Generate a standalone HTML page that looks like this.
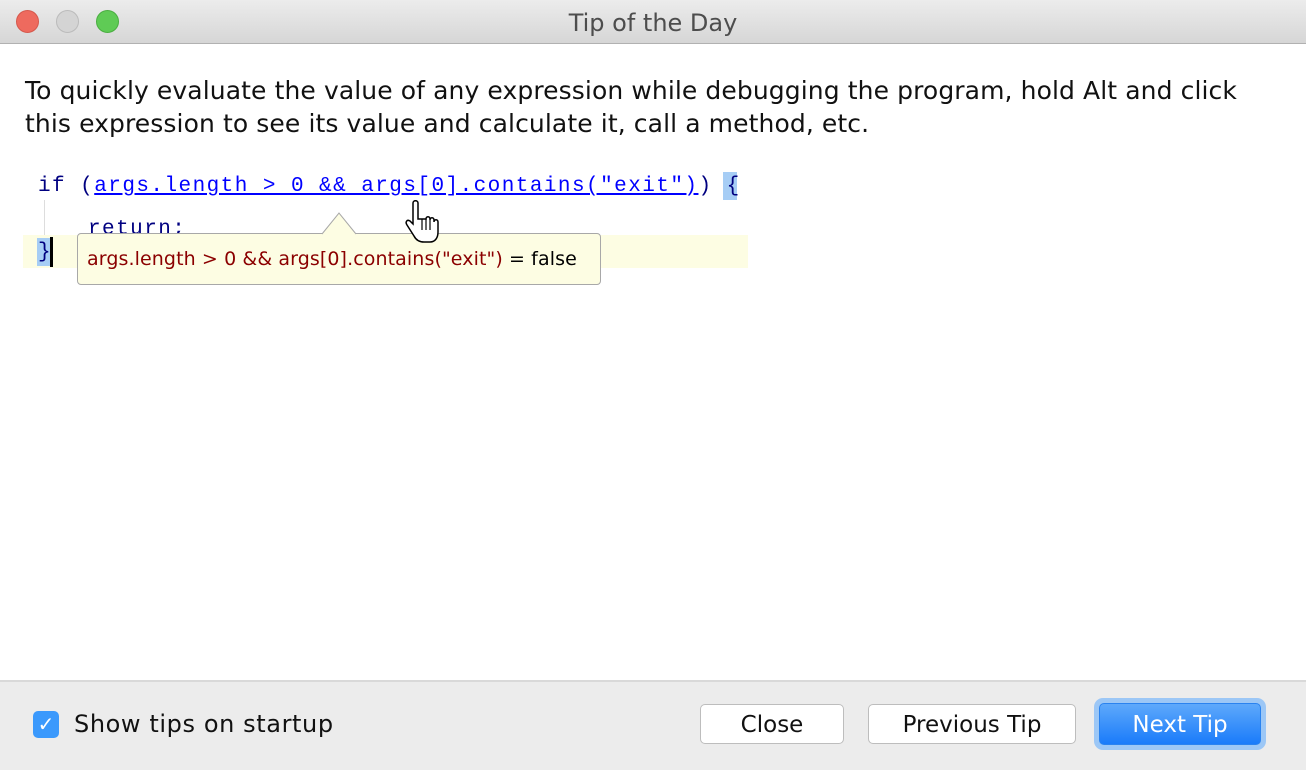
<!DOCTYPE html><html><head><style>
body{margin:0;width:1306px;height:768px;background:#fff;position:relative;overflow:hidden;font-family:"DejaVu Sans","Liberation Sans",sans-serif}
.tb{position:absolute;left:0;top:0;width:1306px;height:43px;background:linear-gradient(#ececec,#d6d6d6);border-bottom:1px solid #b1b1b1}
.dot{position:absolute;top:10px;width:23px;height:23px;border-radius:50%}
.title{position:absolute;top:9px;left:0;width:1306px;text-align:center;font-size:24px;color:#4d4d4d}
.p{position:absolute;left:25px;top:74px;font-size:25px;letter-spacing:0.1px;line-height:33px;color:#111}
.code{position:absolute;font-family:"Liberation Mono",monospace;font-size:21px;letter-spacing:1.45px;color:#000080;white-space:pre}
.u{color:#0000ff;text-decoration:underline}
.bot{position:absolute;left:0;top:680px;width:1306px;height:88px;background:#ececec;border-top:2px solid #d9d9d9}
.btn{position:absolute;top:704px;height:40px;border:1px solid #bdbdbd;border-radius:5px;background:#fff;font-size:23px;line-height:40px;text-align:center;color:#111;box-sizing:border-box}
</style></head><body>
<div class="tb"><div class="dot" style="left:16px;background:#ee6a5e;border:1px solid #d5584c;box-sizing:border-box"></div><div class="dot" style="left:56px;background:#d4d4d4;border:1px solid #bbb;box-sizing:border-box"></div><div class="dot" style="left:96px;background:#5fcb55;border:1px solid #4aae41;box-sizing:border-box"></div><div class="title">Tip of the Day</div></div>
<div class="p">To quickly evaluate the value of any expression while debugging the program, hold Alt and click<br>this expression to see its value and calculate it, call a method, etc.</div>
<div style="position:absolute;left:23px;top:235px;width:725px;height:33px;background:#fdfde3"></div>
<div style="position:absolute;left:44px;top:200px;width:1px;height:35px;background:#ddd"></div>
<div style="position:absolute;left:723px;top:172px;width:14px;height:28px;background:#a6cdf5"></div>
<div style="position:absolute;left:37px;top:238px;width:13px;height:28px;background:#a6cdf5"></div>
<div style="position:absolute;left:50px;top:237px;width:3px;height:30px;background:#000"></div>
<div class="code" style="left:38px;top:175px">if (<span class="u">args.length &gt; 0 &amp;&amp; args[0].contains("exit")</span>) {</div>
<div class="code" style="left:88px;top:218px">return;</div>
<div class="code" style="left:38px;top:241px">}</div>
<div style="position:absolute;left:77px;top:233px;width:524px;height:52px;box-sizing:border-box;background:#fdfde3;border:1px solid #a8a8a8;border-radius:4px"></div>
<svg style="position:absolute;left:320px;top:211px" width="40" height="24"><path d="M2 23 L19 2 L36 23" fill="#fdfde3" stroke="#a8a8a8" stroke-width="1"/><rect x="3" y="22.5" width="32" height="2" fill="#fdfde3"/></svg>
<div style="position:absolute;left:87px;top:248px;font-size:19px;letter-spacing:0.1px;color:#8b0000">args.length &gt; 0 &amp;&amp; args[0].contains("exit") <span style="color:#000">= false</span></div>
<svg style="position:absolute;left:403px;top:200px" width="40" height="46"><path d="M10 3 L10 24 L7 21 C4 19 2 22 4 25 L11 36 C13 40 16 42 21 42 L27 42 C32 42 35 38 35 32 L35 22 C35 19 31 19 31 22 L31 20 C31 17 27 17 27 20 L27 19 C27 16 23 16 23 19 L23 19 L15 19 L15 3 C15 0 10 0 10 3 Z" fill="#fff" stroke="#000" stroke-width="1.5"/><path d="M19 19 V30 M23 19 V30 M27 20 V30" stroke="#000" stroke-width="1.2"/></svg>
<div class="bot"></div>
<div style="position:absolute;left:33px;top:711px;width:26px;height:27px;border-radius:5px;background:#3b99fc;color:#fff;font-size:20px;text-align:center;line-height:27px">✓</div>
<div style="position:absolute;left:74px;top:710px;font-size:24px;letter-spacing:0.6px;color:#111">Show tips on startup</div>
<div class="btn" style="left:700px;width:144px">Close</div>
<div class="btn" style="left:868px;width:208px">Previous Tip</div>
<div style="position:absolute;left:1094px;top:698px;width:172px;height:52px;border-radius:9px;background:#9cc7f6"></div>
<div class="btn" style="left:1099px;width:162px;top:703px;height:42px;line-height:42px;border:1px solid #2a83f0;background:linear-gradient(#5ea9fb,#1a7bfa);color:#fff">Next Tip</div>
</body></html>
